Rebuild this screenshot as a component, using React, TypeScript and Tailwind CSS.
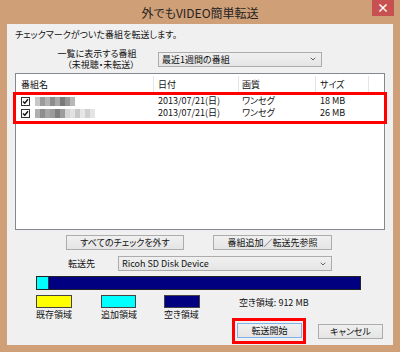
import { ChevronDown } from "lucide-react";

const font = "font-['Noto_Sans_CJK_JP',sans-serif] [font-feature-settings:'palt']";

const blur1 = ["bg-[#c8c8c8]", "bg-[#9c9c9c]", "bg-[#b4b4b4]", "bg-[#8c8c8c]", "bg-[#a8a8a8]", "bg-[#7a7a7a]", "bg-[#969696]", "bg-[#b8b8b8]"];
const blur2 = ["bg-[#b0b0b0]", "bg-[#8e8e8e]", "bg-[#a6a6a6]", "bg-[#9a9a9a]", "bg-[#7e7e7e]", "bg-[#9c9c9c]", "bg-[#d4d4d4]", "bg-[#e2e2e2]", "bg-[#c8c8c8]", "bg-[#e6e6e6]", "bg-[#cfcfcf]", "bg-[#e4e4e4]"];

function Combo({ text, className }: { text: string; className: string }) {
    return (
        <div className={`flex h-[15px] items-center justify-between border border-[#acacac] bg-gradient-to-b from-[#f0f0f0] to-[#e5e5e5] pl-[3px] pr-[4px] text-[9px] leading-none ${className}`}>
            <span>{text}</span>
            <ChevronDown size={8} strokeWidth={2.5} className="text-[#444]" />
        </div>
    );
}

function Button({ text, className = "", primary = false }: { text: string; className?: string; primary?: boolean }) {
    return (
        <div className={`flex h-[15px] items-center justify-center border bg-gradient-to-b from-[#f0f0f0] to-[#e5e5e5] text-[9px] leading-none ${primary ? "border-[#7eb4ea]" : "border-[#acacac]"} ${className}`}>
            {text}
        </div>
    );
}

function Check() {
    return (
        <div className="flex h-[9px] w-[9px] items-center justify-center border border-[#333] bg-white">
            <svg width="7" height="7" viewBox="0 0 7 7">
                <path d="M1 3.5 L2.8 5.3 L6 1.3" fill="none" stroke="#111" strokeWidth="1.4" />
            </svg>
        </div>
    );
}

function Row({ blur, size }: { blur: string[]; size: string }) {
    return (
        <div className="grid h-[12px] grid-cols-[137px_85px_77px_53px_1fr] items-center text-[9px] leading-[12px]">
            <div className="flex items-center gap-[5px] pl-[5px]">
                <Check />
                <div className="flex">
                    {blur.map((c, i) => (
                        <div key={i} className={`h-[9px] w-[5px] ${c}`} />
                    ))}
                </div>
            </div>
            <div className="pl-[5px]">2013/07/21(日)</div>
            <div className="pl-[4px]">ワンセグ</div>
            <div className="pl-[5px]">{size}</div>
            <div />
        </div>
    );
}

export default function App() {
    return (
        <div className={`flex h-[352px] w-[400px] flex-col bg-[#cf9f78] text-[#111] ${font}`}>
            <div className="grid h-[24px] grid-cols-[1fr_auto_1fr]">
                <div />
                <div className="pt-[5px] text-[12px] leading-[15px] text-[#222]">外でもVIDEO簡単転送</div>
                <div className="flex justify-end pr-[6px]">
                    <div className="flex h-[16px] w-[22px] items-center justify-center bg-[#c75050] text-[12px] font-bold leading-none text-white">×</div>
                </div>
            </div>

            <div className="mx-[7px] mb-[7px] flex flex-1 flex-col bg-[#f0f0f0]">
                <div className="mt-[5px] pl-[8px] text-[9px] leading-[12px]">チェックマークがついた番組を転送します。</div>

                <div className="mt-[7px] flex items-center">
                    <div className="ml-[41px] w-[98px] text-center text-[9px] leading-[11px]">
                        <div>一覧に表示する番組</div>
                        <div className="pl-[8px]">（未視聴・未転送）</div>
                    </div>
                    <Combo text="最近1週間の番組" className="ml-[12px] w-[164px]" />
                </div>

                <div className="mx-[8px] mt-[3px] h-[157px] border border-[#828790] bg-white">
                    <div className="grid h-[18px] grid-cols-[137px_85px_77px_53px_1fr] text-[9px] leading-[12px]">
                        <div className="pl-[5px] pt-[5px]">番組名</div>
                        <div className="mt-[2px] border-l border-[#e5e5e5] pl-[4px] pt-[3px]">日付</div>
                        <div className="mt-[2px] border-l border-[#e5e5e5] pl-[3px] pt-[3px]">画質</div>
                        <div className="mt-[2px] border-l border-[#e5e5e5] pl-[4px] pt-[3px]">サイズ</div>
                        <div className="mt-[2px] border-l border-[#e5e5e5]" />
                    </div>
                    <div className="-mx-[3px] border-[3px] border-[#ff0000] pb-[2px]">
                        <Row blur={blur1} size="18 MB" />
                        <Row blur={blur2} size="26 MB" />
                    </div>
                </div>

                <div className="mt-[5px] flex">
                    <Button text="すべてのチェックを外す" className="ml-[59px] w-[118px]" />
                    <Button text="番組追加／転送先参照" className="ml-[29px] w-[119px]" />
                </div>

                <div className="mt-[6px] flex items-center">
                    <div className="ml-[61px] w-[50px] text-[9px] leading-none">転送先</div>
                    <Combo text="Ricoh SD Disk Device" className="w-[214px]" />
                </div>

                <div className="ml-[29px] mt-[5px] flex h-[14px] w-[325px] border border-[#222] bg-[#000080]">
                    <div className="w-[12px] border-r border-[#333] bg-[#00ffff]" />
                </div>

                <div className="ml-[29px] mt-[5px] flex text-[9px] leading-[10px]">
                    <div className="flex w-[65px] flex-col gap-[2px]">
                        <div className="h-[13px] w-[36px] border border-[#444] bg-[#ffff00]" />
                        <div>既存領域</div>
                    </div>
                    <div className="flex w-[63px] flex-col gap-[2px]">
                        <div className="h-[13px] w-[35px] border border-[#444] bg-[#00ffff]" />
                        <div>追加領域</div>
                    </div>
                    <div className="flex w-[75px] flex-col gap-[2px]">
                        <div className="h-[13px] w-[36px] border border-[#444] bg-[#000080]" />
                        <div>空き領域</div>
                    </div>
                    <div className="pt-[3px]">空き領域: 912 MB</div>
                </div>

                <div className="mt-[-2px] flex items-center justify-end pr-[10px]">
                    <div className="border-[3px] border-[#ff0000] pb-[3px] pl-[2px] pr-[1px] pt-[2px]">
                        <Button text="転送開始" primary className="h-[14px] w-[65px]" />
                    </div>
                    <Button text="キャンセル" className="ml-[12px] h-[14px] w-[65px]" />
                </div>
            </div>
        </div>
    );
}
